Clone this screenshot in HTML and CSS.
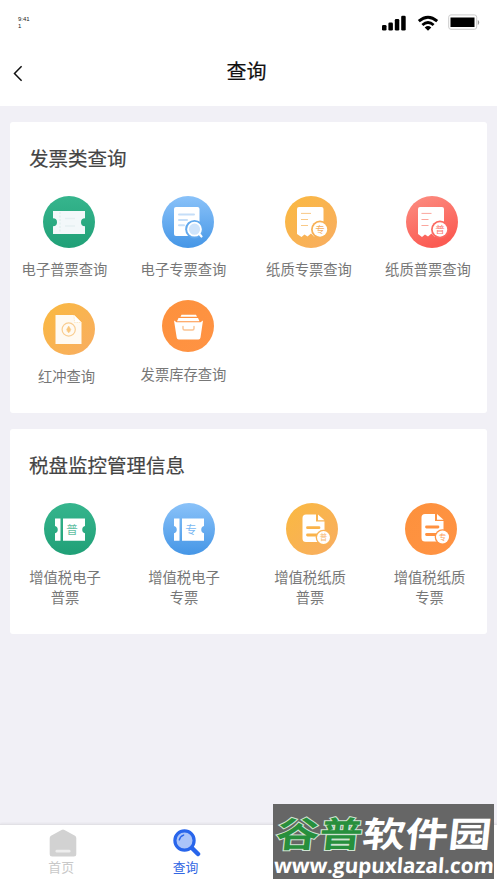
FILE: index.html
```html
<!DOCTYPE html>
<html lang="zh-CN">
<head>
<meta charset="utf-8">
<title>查询</title>
<link rel="stylesheet" href="styles.css">
</head>
<body>
<svg class="defs" width="0" height="0">
  <defs>
    <linearGradient id="green" x1="0" y1="0" x2="0" y2="1"><stop offset="0" stop-color="#36b58d"/><stop offset="1" stop-color="#20a077"/></linearGradient>
    <linearGradient id="blue" x1="0" y1="0" x2="0" y2="1"><stop offset="0" stop-color="#8ac2f9"/><stop offset="1" stop-color="#4596e6"/></linearGradient>
    <linearGradient id="amber" x1="0" y1="0" x2="1" y2="1"><stop offset="0" stop-color="#fab940"/><stop offset="1" stop-color="#f8ad62"/></linearGradient>
    <linearGradient id="red" x1="0" y1="0" x2=".4" y2="1"><stop offset="0" stop-color="#fc8f83"/><stop offset="1" stop-color="#fb5b53"/></linearGradient>
    <linearGradient id="orange" x1="0" y1="0" x2="1" y2="1"><stop offset="0" stop-color="#fd913c"/><stop offset="1" stop-color="#ff9344"/></linearGradient>
  </defs>
</svg>
<div class="screen">
  <header class="header">
    <div class="status">
      <div class="time">9:41<br>1</div>
      <div class="signals">
        <svg width="24" height="16" viewBox="0 0 24 16"><rect x="0" y="10" width="4.5" height="5.5" rx="1.3"/><rect x="6.4" y="7.4" width="4.5" height="8.1" rx="1.3"/><rect x="12.8" y="4" width="4.5" height="11.5" rx="1.3"/><rect x="19.2" y=".8" width="4.5" height="14.7" rx="1.3"/></svg>
        <svg class="wifi" width="22" height="17" viewBox="0 0 22 17"><path d="M1.8 6.2Q11-1.6 20.2 6.2M5.4 10Q11 5.2 16.6 10" fill="none" stroke="#000" stroke-width="2.9"/><path d="M7.7 12.4q3.3-2.7 6.6 0L11 15.8z"/></svg>
        <svg class="battery" width="32" height="17" viewBox="0 0 32 17"><rect x=".7" y=".9" width="28" height="14.4" rx="2.3" fill="#fff" stroke="#ccc"/><rect x="2.5" y="3.500" width="24" height="9.500"/><path d="M29.8 6v5q1.4-.7 1.4-2.5T29.8 6z" fill="#999"/></svg>
      </div>
    </div>
    <div class="nav">
      <svg class="back" width="10" height="17" viewBox="0 0 10 17"><path d="M8.6 1.2 1.5 8.5l7.1 7.3" fill="none" stroke="#111" stroke-width="1.5"/></svg>
      <h1>查询</h1>
    </div>
  </header>

  <main>
    <section class="card invoices">
      <h2>发票类查询</h2>
      <div class="grid">
        <a class="item">
          <svg class="icon" viewBox="0 0 52 52"><circle cx="26" cy="26" r="26" fill="url(#green)"/><path d="M10 15h32v7.3a4 4 0 0 0 0 8V38H10v-7.7a4 4 0 0 0 0-8z" fill="#f3f8fa"/><path d="M17 16v21" stroke="#dfeeed" stroke-width="1.2" stroke-dasharray="2 1.5"/><path d="M22 22.5h10M22 30h10" stroke="#e6eff2" stroke-width="1.7"/></svg>
          <span>电子普票查询</span>
        </a>
        <a class="item">
          <svg class="icon" viewBox="0 0 52 52"><circle cx="26" cy="26" r="26" fill="url(#blue)"/><rect x="12" y="11" width="25.5" height="29" rx="2" fill="#fff"/><path d="M17 18.5h15M17 24h8M17 29.2h5" stroke="#c5def8" stroke-width="2" stroke-linecap="round"/><circle cx="32.5" cy="33.2" r="9.3" fill="#62a9ed"/><path d="m37 37.5 2.5 3" stroke="#fff" stroke-width="2.2" stroke-linecap="round"/><circle cx="32.5" cy="33.2" r="6.5" fill="#cfe4fb" stroke="#fff" stroke-width="1.8"/></svg>
          <span>电子专票查询</span>
        </a>
        <a class="item third">
          <svg class="icon" viewBox="0 0 52 52"><circle cx="26" cy="26" r="26" fill="url(#amber)"/><path d="M14 11h22.5q2 0 2 2v26l-3 1.5-2.5-2-4 2-3-3-3.5 3-3-2-3 2.5-4.5-3V13q0-2 2-2z" fill="#fff"/><path d="M16 17.4h10M16 23.5h7M16 29.5h7" stroke="#f9c987" stroke-width="1"/><circle cx="35" cy="33.5" r="9" fill="#f8b155"/><circle cx="35" cy="33.5" r="7.2" fill="#fff"/><text class="stamp" x="35" y="37" fill="#f4ae61">专</text></svg>
          <span>纸质专票查询</span>
        </a>
        <a class="item fourth">
          <svg class="icon" viewBox="0 0 52 52"><circle cx="26" cy="26" r="26" fill="url(#red)"/><path d="M14 11h22q2 0 2 2v26l-3 1.5-2.5-2-4 2-3-3-3.5 3-3-2-3 2.5-4-3V13q0-2 2-2z" fill="#fff"/><path d="M15.5 17.4h10M15.5 23.5h7M15.5 29.5h7" stroke="#fba69d" stroke-width="1"/><circle cx="34" cy="33.5" r="9" fill="#fb6a61"/><circle cx="34" cy="33.5" r="7.2" fill="#fff"/><text class="stamp" x="34" y="37" fill="#fb7c74">普</text></svg>
          <span>纸质普票查询</span>
        </a>
        <a class="item reversal">
          <svg class="icon" viewBox="0 0 52 52"><circle cx="26" cy="26" r="26" fill="url(#amber)"/><path d="M12.5 12H31l7.500 7.500V41h-26z" fill="#fffaf2"/><path d="m31 12 .5 7.500h7" fill="#fff" stroke="#fbdca6" stroke-width=".7" stroke-dasharray="1 .7"/><circle cx="25.700" cy="26.500" r="6.600" fill="none" stroke="#f9cd91" stroke-width="1.200"/><path d="m25.700 23 2.100 3.500-2.100 3.500-2.100-3.500zM23.500 28h4.400" fill="#f9c67d" stroke="#f9c67d" stroke-width=".5"/></svg>
          <span>红冲查询</span>
        </a>
        <a class="item stock">
          <svg class="icon" viewBox="0 0 52 52"><circle cx="26" cy="26" r="26" fill="url(#orange)"/><path d="M19.500 14.800H34l1 1.900H18.500zM16.500 17.900H36l1.500 3.400H15z" fill="#fff"/><path d="M12 20.500l2.500 1.700h24l2.500-1.700L38.500 37.500q-.3 2-2 2H16.700q-1.700 0-2-2z" fill="#fff"/><path d="M21 26.500v2q0 1.500 1.500 1.500h8q1.500 0 1.500-1.500v-2" fill="none" stroke="#fac393" stroke-width="1.400" stroke-linecap="round"/></svg>
          <span>发票库存查询</span>
        </a>
      </div>
    </section>

    <section class="card tax">
      <h2>税盘监控管理信息</h2>
      <div class="grid">
        <a class="item">
          <svg class="icon" viewBox="0 0 52 52"><circle cx="26" cy="26" r="26" fill="url(#green)"/><path d="M11 15.500h5.500v22.300H11v-7.500a3.800 3.800 0 0 0 0-7.300zM19 15.500h22V23a3.800 3.800 0 0 0 0 7.300v7.500H19z" fill="#fff"/><text class="mark" x="28" y="31" fill="#5fc0a2">普</text></svg>
          <span>增值税电子<br>普票</span>
        </a>
        <a class="item">
          <svg class="icon" viewBox="0 0 52 52"><circle cx="26" cy="26" r="26" fill="url(#blue)"/><path d="M11 15.500h5.500v22.300H11v-7.500a3.800 3.800 0 0 0 0-7.300zM19 15.500h22V23a3.800 3.800 0 0 0 0 7.300v7.500H19z" fill="#fff"/><text class="mark" x="28" y="31" fill="#7ab8f3">专</text></svg>
          <span>增值税电子<br>专票</span>
        </a>
        <a class="item third">
          <svg class="icon" viewBox="0 0 52 52"><circle cx="26" cy="26" r="26" fill="url(#amber)"/><path d="M20 11.500h10v7h8.500v20.500H20q-3.500 0-3.500-3.500V15q0-3.500 3.500-3.500z" fill="#fff"/><path d="m32 11.500 6.500 5.800H32z" fill="#fff"/><path d="M21.500 24.700H33M21.500 32H31" stroke="#fab34a" stroke-width="2.800" stroke-linecap="round"/><circle cx="37.500" cy="34.500" r="7.800" fill="#f9b356"/><circle cx="37.500" cy="34.500" r="6.500" fill="#fff"/><text class="seal" x="37.500" y="37.300" fill="#f8bb76">普</text></svg>
          <span>增值税纸质<br>普票</span>
        </a>
        <a class="item fourth">
          <svg class="icon" viewBox="0 0 52 52"><circle cx="26" cy="26" r="26" fill="url(#orange)"/><path d="M20 11h10v7h8.500v20.500H20q-3.500 0-3.500-3.500V14.500Q16.500 11 20 11z" fill="#fff"/><path d="m32 11 6.500 5.800H32z" fill="#fff"/><path d="M21.500 24H33M21.500 31.500H31" stroke="#ff9140" stroke-width="2.800" stroke-linecap="round"/><circle cx="37.500" cy="34" r="7.800" fill="#ff9242"/><circle cx="37.500" cy="34" r="6.500" fill="#fff"/><text class="seal" x="37.500" y="36.800" fill="#fd9c58">专</text></svg>
          <span>增值税纸质<br>专票</span>
        </a>
      </div>
    </section>
  </main>

  <nav class="tabs">
    <a class="tab">
      <svg width="28" height="28" viewBox="0 0 28 28"><path d="M14 .5q.8 0 1.500.5L26 6.700q1.300.8 1.300 2.500V25q0 2.500-2.500 2.500H3.200Q.7 27.500.7 25V9.200Q.7 7.500 2 6.700L12.500 1Q13.200.5 14 .5z" fill="#d2d2d2"/><rect x="6.500" y="20.700" width="15" height="2.800" rx="1.300" fill="#eee"/></svg>
      <span>首页</span>
    </a>
    <a class="tab active">
      <svg width="28" height="28" viewBox="0 0 28 28"><path d="m18.500 18.500 6.500 6.500" stroke="#2865eb" stroke-width="4.500" stroke-linecap="round"/><circle cx="11.500" cy="11.500" r="9.600" fill="#abc4f9" stroke="#2865eb" stroke-width="3.200"/><path d="M6.300 10.800q.8-3.500 4.300-4.700" fill="none" stroke="#2865eb" stroke-width="1.500" stroke-linecap="round"/></svg>
      <span>查询</span>
    </a>
  </nav>
  <div class="watermark">
    <div class="brand"><span class="brand-green">谷普</span><span>软件园</span></div>
    <div class="site">www.gupuxlazal.com</div>
  </div>
</div>
</body>
</html>
```
FILE: styles.css
```css
* { box-sizing: border-box; }
body {
  margin: 0;
  font-family: "Noto Sans CJK SC", sans-serif;
  color: #777;
  background: #f1f0f6;
}
.defs { display: block; }
.screen {
  position: relative;
  width: 497px;
  height: 883px;
  overflow: hidden;
  display: flex;
  flex-direction: column;
}
.header { height: 106px; background: #fff; }
.status {
  height: 44px;
  display: flex;
  justify-content: space-between;
  padding: 15px 17px 0 18px;
}
.time {
  padding-top: 1px;
  font: 6px/7px "Liberation Sans", sans-serif;
  color: #222;
}
.signals { display: flex; }
.wifi { margin-left: 11px; }
.battery { margin: -1px 0 0 9px; }
.nav {
  height: 54px;
  display: grid;
  grid-template-columns: 40px 1fr 40px;
  align-items: center;
}
.back { margin: 4px 0 0 13px; }
h1 {
  margin: 0 4px 0 0;
  text-align: center;
  font-size: 20px;
  line-height: 30px;
  font-weight: 400;
  color: #111;
  -webkit-text-stroke: .2px #111;
}
main {
  flex: 1;
  padding: 16px 10px 0;
  display: flex;
  flex-direction: column;
  gap: 16px;
}
.card {
  background: #fff;
  border-radius: 3px;
  padding: 21px 0 0 12px;
}
.invoices { height: 291px; }
.tax { height: 205px; }
h2 {
  margin: 0 0 0 7px;
  font-size: 19.5px;
  line-height: 30px;
  font-weight: 400;
  color: #444;
  -webkit-text-stroke: .2px #444;
}
.grid {
  display: grid;
  grid-template-columns: 119px 125px 119px 86px;
  grid-template-rows: 107px;
  margin-top: 23px;
}
.item {
  width: 86px;
  display: flex;
  flex-direction: column;
  align-items: center;
  text-align: center;
  font-size: 14.3px;
  line-height: 20px;
  white-space: nowrap;
}
.item span { margin-left: -1px; }
.item.third span, .item.fourth span { margin-left: 0; }
.icon {
  width: 52px;
  height: 52px;
  margin: 0 0 11px 8px;
}
.third .icon { margin-left: 4px; }
.fourth .icon { margin-left: 8px; }
.reversal span { padding-left: 4px; }
.stock { margin-top: -3px; }
.stock .icon { margin-bottom: 12px; }
.tax .icon { margin-left: 10px; margin-bottom: 12px; }
.tax .item span { padding-left: 1px; }
.tax .third .icon { margin-left: 5px; }
.tax .third span { padding-left: 2px; }
.tax .fourth .icon { margin-left: 6px; }
.tax .fourth span { padding-left: 3px; }
.icon text { text-anchor: middle; }
.stamp { font-size: 9.5px; }
.mark { font-size: 11.5px; }
.seal { font-size: 7.5px; }
.tabs {
  height: 59px;
  background: #fff;
  border-top: 1px solid #e2e1e6;
  box-shadow: 0 -1px 2px rgba(0, 0, 0, .05);
  display: grid;
  grid-template-columns: repeat(4, 124.3px);
}
.tab {
  display: flex;
  flex-direction: column;
  align-items: center;
  padding-top: 4px;
  font-size: 12.8px;
  line-height: 20px;
  color: #c9c9c9;
}
.tab svg { margin-left: 1px; }
.tab span { margin-right: 2px; }
.active { color: #3267e3; }
.watermark {
  position: absolute;
  left: 273px;
  top: 804px;
  width: 221px;
  height: 75px;
  background: #666;
  color: #fff;
}
.brand {
  display: flex;
  width: 178px;
  height: 51px;
  padding-left: 1px;
  font-size: 35px;
  line-height: 56px;
  font-weight: 700;
  white-space: nowrap;
  transform: scaleX(1.23) skewX(-5deg);
  transform-origin: 0 100%;
}
.brand-green {
  color: #278f3c;
  -webkit-text-stroke: 2px #cfe3d1;
  paint-order: stroke fill;
}
.site {
  height: 24px;
  padding-left: 1px;
  font: 700 20.8px/21px "Open Sans", sans-serif;
  letter-spacing: -.1px;
  white-space: nowrap;
  transform: skewX(-4deg);
}
```
